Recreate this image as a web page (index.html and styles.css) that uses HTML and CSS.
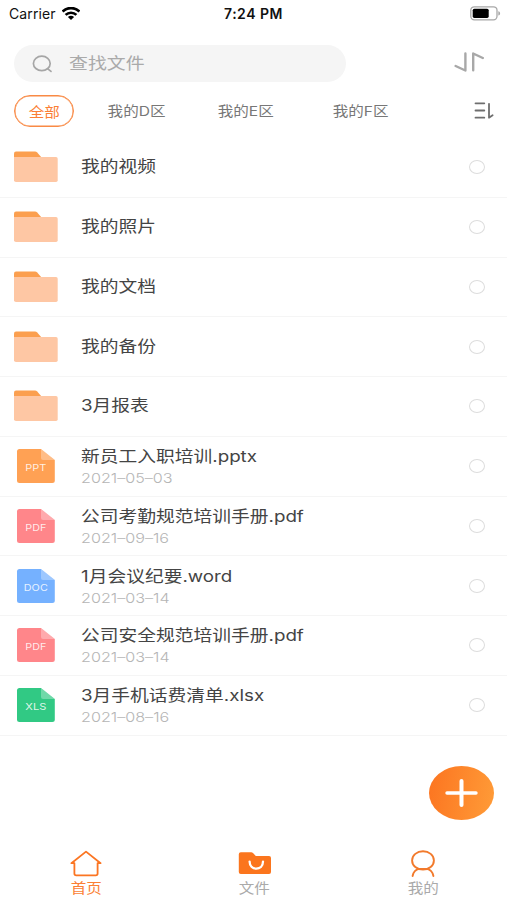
FILE: index.html
```
<!DOCTYPE html>
<html lang="zh-CN">
<head>
  <meta charset="UTF-8">
  <meta name="viewport" content="width=device-width, initial-scale=1.0">
  <title>文件</title>
  <link rel="stylesheet" href="styles.css">
</head>
<body>
  <div class="app">
    <div class="status">
      <div class="carrier">
        <span>Carrier</span>
        <svg width="18" height="14" viewBox="0 0 18 14" fill="none" stroke="#000" stroke-width="2.7">
          <path d="M.6 4.6C5.1-.1 12.9-.1 17.4 4.6"/>
          <path d="M3.6 7.9c3-2.9 7.8-2.9 10.8 0"/>
          <path d="M5.9 9.9c1.8-1.5 4.4-1.5 6.2 0L9 13z" fill="#000" stroke="none"/>
        </svg>
      </div>
      <div class="time">7:24 PM</div>
      <svg class="battery" width="31" height="15" viewBox="0 0 31 15">
        <rect x=".8" y=".8" width="26.2" height="13" rx="3.5" fill="#fff" stroke="#a8a8a8" stroke-width="1.3"/>
        <rect x="2.7" y="2.7" width="16" height="9.2" rx="1.6"/>
        <path d="M28.3 5.2c2.4.6 2.4 3.8 0 4.4z" fill="#a8a8a8"/>
      </svg>
    </div>

    <div class="top">
      <div class="search">
        <svg width="21" height="18" viewBox="0 0 21 18" fill="none" stroke="#a6a6a6" stroke-width="1.7" stroke-linecap="round">
          <ellipse cx="9.8" cy="8.4" rx="8.4" ry="7.2"/>
          <path d="M15.8 13.8l3.2 2.6"/>
        </svg>
        <span class="wide">查找文件</span>
      </div>
      <svg class="swap" width="30" height="20" viewBox="0 0 30 20" fill="none" stroke="#a8a8a8" stroke-width="2.4" stroke-linecap="round" stroke-linejoin="round">
        <path d="M11.4 1.5v17L1.6 14"/>
        <path d="M19.2 18.3V1.5L28.8 6"/>
      </svg>
    </div>

    <div class="filters">
      <div class="chip active"><span class="wide">全部</span></div>
      <div class="chip"><span class="wide">我的D区</span></div>
      <div class="chip"><span class="wide">我的E区</span></div>
      <div class="chip"><span class="wide">我的F区</span></div>
      <svg width="20" height="18" viewBox="0 0 20 18" fill="none" stroke="#6e6e6e" stroke-width="1.8" stroke-linecap="round" stroke-linejoin="round">
        <path d="M1.5 1.3h8.8M1.5 8.5h8.8M1.5 15.7h8.8M15 1.8V15.7l3.6-2.4"/>
      </svg>
    </div>

    <div class="list" id="list"></div>

    <div class="tabs">
      <div class="tab active">
        <svg width="34" height="28" viewBox="0 0 34 28" fill="none" stroke="#fb7522" stroke-width="1.8" stroke-linejoin="round" stroke-linecap="round">
          <path d="M5.4 13.2H2.4L17 1.6l14.6 11.6h-3v10.4q0 1.8-1.8 1.8H7.2q-1.8 0-1.8-1.8z"/>
        </svg>
        <span class="wide">首页</span>
      </div>
      <div class="tab">
        <svg width="34" height="28" viewBox="0 0 34 28">
          <path d="M.8 4.3Q.8 2.3 2.8 2.3h10.4q1 0 1.8.8l2.8 2.8H31q2 0 2 2v14q0 2-2 2H2.8q-2 0-2-2z" fill="#fb751d"/>
          <path d="M11.6 11.6c0 9.4 13.4 9.4 13.4 0" fill="none" stroke="#fff" stroke-width="2.3" stroke-linecap="round"/>
        </svg>
        <span class="wide">文件</span>
      </div>
      <div class="tab">
        <svg width="34" height="28" viewBox="0 0 34 28" fill="none" stroke="#f27a2c" stroke-width="1.9" stroke-linecap="round">
          <ellipse cx="17" cy="10.4" rx="10.9" ry="9.2"/>
          <path d="M6.600 26c.7-3.5 3.4-6.6 6.6-7.1h7.6c3.2.5 5.9 3.6 6.6 7.1"/>
        </svg>
        <span class="wide">我的</span>
      </div>
    </div>

    <div class="add">
      <svg width="33" height="28" viewBox="0 0 33 28" fill="none" stroke="#fff" stroke-linecap="round">
        <path d="M2 14h29" stroke-width="3.4"/>
        <path d="M16.5 2v24" stroke-width="4"/>
      </svg>
    </div>
  </div>

  <script>
    const items = [
      { name: '我的视频' },
      { name: '我的照片' },
      { name: '我的文档' },
      { name: '我的备份' },
      { name: '3月报表' },
      { name: '新员工入职培训.pptx', date: '2021–05–03', type: 'ppt' },
      { name: '公司考勤规范培训手册.pdf', date: '2021–09–16', type: 'pdf' },
      { name: '1月会议纪要.word', date: '2021–03–14', type: 'doc' },
      { name: '公司安全规范培训手册.pdf', date: '2021–03–14', type: 'pdf' },
      { name: '3月手机话费清单.xlsx', date: '2021–08–16', type: 'xls' }
    ];

    const folderIcon = `
      <svg class="icon" width="44" height="32" viewBox="0 0 44 32">
        <path d="M0 8V2.5Q0 .5 2 .5h19q1.3 0 2.2.9L28 7v3H0z" fill="#fb9f4f"/>
        <path d="M0 6h42q1.7 0 1.7 1.7v21.6q0 1.7-1.7 1.7H2q-2 0-2-1.7z" fill="#fec7a4"/>
      </svg>`;

    function fileIcon(type) {
      return `
        <svg class="icon ${type}" width="44" height="36" viewBox="0 0 44 36">
          <path d="M5.5 1H27l13.8 11v20.5q0 2.5-2.5 2.5H5.5Q3 35 3 32.5v-29Q3 1 5.5 1z"/>
          <path d="M27 1l13.8 11H29q-2 0-2-2z" fill="#fff" fill-opacity=".3"/>
          <text x="21.8" y="23.4" textLength="${type === 'doc' ? 24 : 21}" lengthAdjust="spacingAndGlyphs">${type.toUpperCase()}</text>
        </svg>`;
    }

    // Folders have no type and no date
    document.getElementById('list').innerHTML = items.map((item) => `
      <div class="row">
        ${item.type ? fileIcon(item.type) : folderIcon}
        <div class="info">
          <div class="name wide">${item.name}</div>
          ${item.date ? `<div class="date wide">${item.date}</div>` : ''}
        </div>
        <div class="check"></div>
      </div>
    `).join('');
  </script>
</body>
</html>
```
FILE: styles.css
```
body {
  margin: 0;
  background: #fff;
  font-family: Inter, "Noto Sans CJK SC", sans-serif;
  color: #444;
}
svg {
  display: block;
  flex: none;
}
.app {
  position: relative;
  display: flex;
  flex-direction: column;
  width: 507px;
  height: 900px;
  overflow: hidden;
}
.wide {
  display: block;
  transform: scaleX(1.18);
  white-space: nowrap;
}
.status {
  display: grid;
  grid-template-columns: 1fr auto 1fr;
  align-items: center;
  height: 27px;
  padding: 0 6px 0 9px;
  box-sizing: border-box;
  color: #111;
  font-size: 14px;
}
.carrier {
  display: flex;
  align-items: center;
  gap: 6px;
  letter-spacing: 0.1px;
}
.time {
  margin-left: -3px;
  font-weight: 600;
  letter-spacing: 0.5px;
}
.battery {
  justify-self: end;
}
.top {
  display: flex;
  align-items: center;
  justify-content: space-between;
  margin-top: 18px;
  padding: 0 23px 0 14px;
}
.swap {
  margin-bottom: 4px;
}
.search {
  display: flex;
  align-items: center;
  gap: 16px;
  width: 332px;
  height: 37px;
  padding-left: 18px;
  box-sizing: border-box;
  border-radius: 19px;
  background: #f5f5f5;
  color: #aaa;
  font-size: 16px;
}
.search .wide {
  padding-bottom: 3px;
  transform-origin: left;
}
.filters {
  display: flex;
  align-items: center;
  height: 32px;
  margin-top: 13px;
  padding: 0 13px 0 14px;
  color: #777;
  font-size: 13.2px;
}
.chip {
  display: flex;
  justify-content: center;
  width: 60px;
  margin-right: 49px;
  padding-bottom: 1px;
}
.chip:nth-child(2) {
  margin-left: -16.5px;
}
.chip:nth-child(3) {
  margin-right: 55px;
}
.chip.active {
  align-items: center;
  height: 32px;
  padding: 0;
  box-sizing: border-box;
  border: 1px solid #f98a45;
  border-radius: 16px;
  box-shadow: inset 0 0 0 0.5px #f98a45;
  color: #fb7f35;
}
.filters svg {
  margin-left: auto;
}
.list {
  margin-top: 11px;
}
.row {
  display: flex;
  align-items: center;
  height: 59.75px;
  padding: 0 22px 0 14px;
  box-sizing: border-box;
  border-bottom: 1px solid #f5f5f5;
}
.info {
  flex: 1;
  padding-left: 23px;
}
.info .wide {
  transform-origin: left;
}
.name {
  font-size: 15.9px;
  line-height: 22px;
}
.date {
  color: #b5b5b5;
  font-size: 13.7px;
  font-weight: 300;
  line-height: 22px;
}
/* two-line rows sit a little lower */
.name:not(:last-child) {
  margin-bottom: -1px;
  padding-top: 3px;
}
.icon text {
  fill: #fff;
  fill-opacity: .85;
  font-size: 9.5px;
  text-anchor: middle;
}
.ppt {
  fill: #ffa154;
}
.pdf {
  fill: #ff868a;
}
.doc {
  fill: #75b1ff;
}
.xls {
  fill: #31c984;
}
.check {
  width: 16px;
  height: 14px;
  box-sizing: border-box;
  border: 1px solid #ddd;
  border-radius: 50%;
}
.tabs {
  display: flex;
  justify-content: space-between;
  margin-top: auto;
  padding: 0 67px 2px 69px;
}
.tab {
  display: flex;
  flex-direction: column;
  align-items: center;
  width: 34px;
  color: #aaa;
  font-size: 13.2px;
  line-height: 20px;
}
.tab.active {
  color: #fb7f35;
}
.add {
  position: absolute;
  right: 13px;
  top: 766px;
  display: flex;
  align-items: center;
  justify-content: center;
  width: 65px;
  height: 54px;
  border-radius: 50%;
  background: linear-gradient(100deg, #fc7420, #ff9c38);
}
```
